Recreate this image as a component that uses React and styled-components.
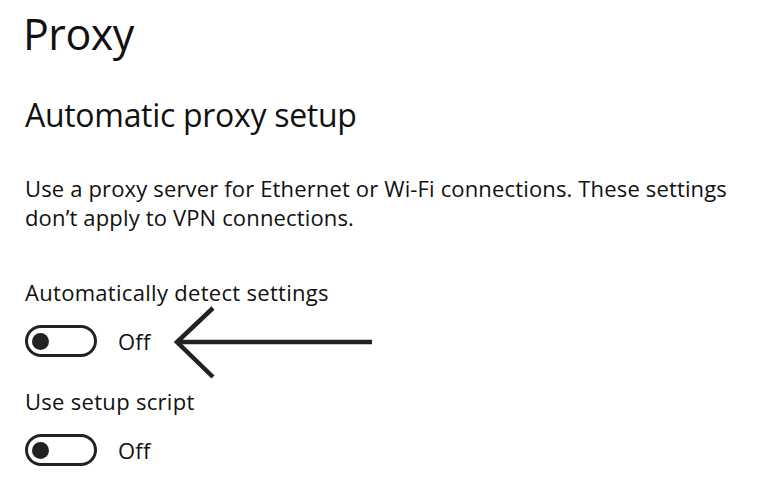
import React from "react";
import styled, { createGlobalStyle } from "styled-components";

const GlobalStyle = createGlobalStyle`
  html, body {
    margin: 0;
    padding: 0;
    background: #ffffff;
  }
  body {
    font-family: "Open Sans", "Noto Sans", sans-serif;
    color: #111111;
  }
`;

const Page = styled.div`
  position: relative;
  width: 763px;
  height: 485px;
  overflow: hidden;
  padding: 0 0 0 23px;
  box-sizing: border-box;
`;

const Title = styled.h1`
  margin: 0;
  padding-top: 6px;
  font-size: 43px;
  font-weight: 400;
  line-height: 56px;
  letter-spacing: -0.5px;
`;

const Subtitle = styled.h2`
  margin: 30px 0 0 2px;
  font-size: 32px;
  font-weight: 400;
  line-height: 46px;
  letter-spacing: -0.3px;
`;

const Description = styled.p`
  margin: 36px 0 0 2px;
  width: 722px;
  font-size: 22px;
  line-height: 29px;
  letter-spacing: 0.15px;
`;

const Setting = styled.div`
  display: flex;
  flex-direction: column;
  margin: ${(props) => props.top || "30px"} 0 0 2px;
`;

const Label = styled.div`
  font-size: 22px;
  line-height: 27px;
  letter-spacing: 0.3px;
`;

const ToggleRow = styled.div`
  display: flex;
  align-items: center;
  gap: 21px;
  margin-top: 19px;
`;

const Toggle = styled.div`
  width: 72px;
  height: 32px;
  box-sizing: border-box;
  border: 3px solid #222;
  border-radius: 16px;
  display: flex;
  align-items: center;
  padding-left: 4px;
`;

const Knob = styled.span`
  width: 17px;
  height: 17px;
  border-radius: 50%;
  background: #222;
`;

const State = styled.span`
  font-size: 22px;
  line-height: 27px;
  letter-spacing: 0.2px;
`;

const Arrow = styled.svg`
  position: absolute;
  left: 170px;
  top: 300px;
`;

function Switch({ label, top }) {
  return (
    <Setting top={top}>
      <Label>{label}</Label>
      <ToggleRow>
        <Toggle>
          <Knob />
        </Toggle>
        <State>Off</State>
      </ToggleRow>
    </Setting>
  );
}

export default function App() {
  return (
    <>
      <GlobalStyle />
      <Page>
        <Title>Proxy</Title>
        <Subtitle>Automatic proxy setup</Subtitle>
        <Description>
          Use a proxy server for Ethernet or Wi-Fi connections. These settings
          don’t apply to VPN connections.
        </Description>
        <Switch label="Automatically detect settings" top="47px" />
        <Switch label="Use setup script" top="31px" />
        <Arrow width="210" height="84" viewBox="0 0 210 84">
          <path
            d="M202 42 H8 M43 8 L7 42 L43 77"
            fill="none"
            stroke="#222"
            strokeWidth="4.5"
          />
        </Arrow>
      </Page>
    </>
  );
}
